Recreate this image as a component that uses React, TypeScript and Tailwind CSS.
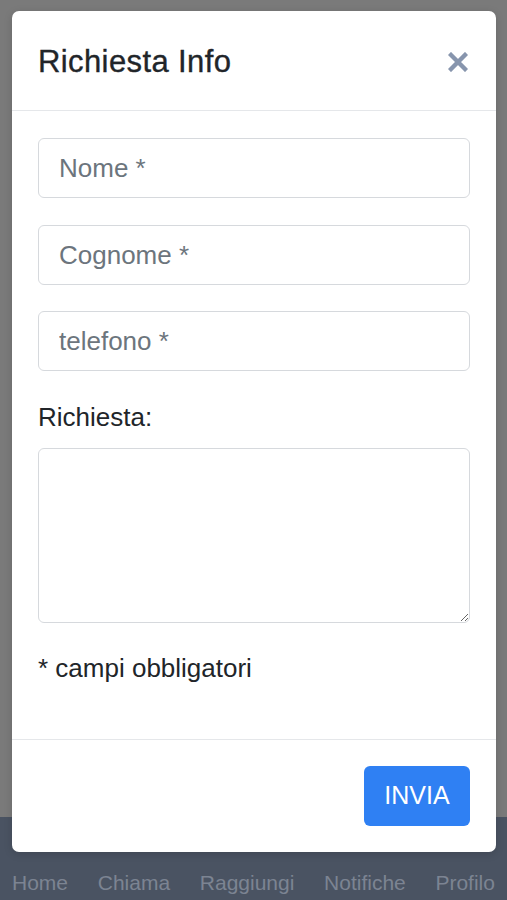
import { useState } from 'react'

const font = { fontFamily: '"Liberation Sans", Arial, sans-serif' }

const navItems = ['Home', 'Chiama', 'Raggiungi', 'Notifiche', 'Profilo']

function Field({ placeholder, className }: { placeholder: string; className?: string }) {
  return (
    <input
      type="text"
      placeholder={placeholder}
      className={`block h-[60px] w-full rounded-[6px] border border-[#d6d9dd] bg-white px-[20px] text-[26px] text-[#212529] placeholder:text-[#6c757d] outline-none ${className ?? ''}`}
    />
  )
}

export default function App() {
  const [richiesta, setRichiesta] = useState('')

  return (
    <div className="relative flex h-[900px] w-full flex-col overflow-hidden bg-[#7a7a7a]" style={font}>
      {/* page underneath the overlay */}
      <div className="flex-1" />
      <nav className="flex h-[83px] items-end justify-between bg-[#4a5362] px-[12px] pb-[7px]">
        {navItems.map((item) => (
          <span key={item} className="text-[21px] leading-[21px] text-[#7c8492]">
            {item}
          </span>
        ))}
      </nav>

      {/* modal */}
      <div className="absolute left-[12px] top-[11px] w-[484px] rounded-[7px] bg-white shadow-[0_2px_8px_rgba(0,0,0,0.15)]">
        <div className="flex h-[100px] items-center justify-between border-b border-[#e5e7ea] pl-[26px] pr-[28px] pt-[3px]">
          <h2 className="text-[31px] leading-[36px] tracking-[0.4px] text-[#212529] [-webkit-text-stroke:0.35px_#212529]">
            Richiesta Info
          </h2>
          <button className="flex h-[20px] w-[20px] items-center justify-center" aria-label="Chiudi">
            <svg width="20" height="20" viewBox="0 0 20 20">
              <path d="M3 3 L17 17 M17 3 L3 17" stroke="#8795ad" strokeWidth="4.4" strokeLinecap="square" />
            </svg>
          </button>
        </div>

        <div className="px-[26px] pb-[56px] pt-[27px]">
          <Field placeholder="Nome *" />
          <Field placeholder="Cognome *" className="mt-[27px]" />
          <Field placeholder="telefono *" className="mt-[26px]" />

          <label className="mt-[31px] block text-[26px] leading-[30px] text-[#212529]">Richiesta:</label>
          <textarea
            value={richiesta}
            onChange={(e) => setRichiesta(e.target.value)}
            className="mt-[16px] block h-[175px] w-full rounded-[6px] border border-[#d6d9dd] bg-white px-[20px] py-[10px] text-[26px] outline-none"
          />

          <p className="mt-[30px] text-[26px] leading-[30px] text-[#212529]">* campi obbligatori</p>
        </div>

        <div className="flex justify-end border-t border-[#e5e7ea] pb-[26px] pr-[26px] pt-[26px]">
          <button className="h-[60px] w-[106px] rounded-[6px] bg-[#2f80f3] text-[25px] text-white">INVIA</button>
        </div>
      </div>
    </div>
  )
}
